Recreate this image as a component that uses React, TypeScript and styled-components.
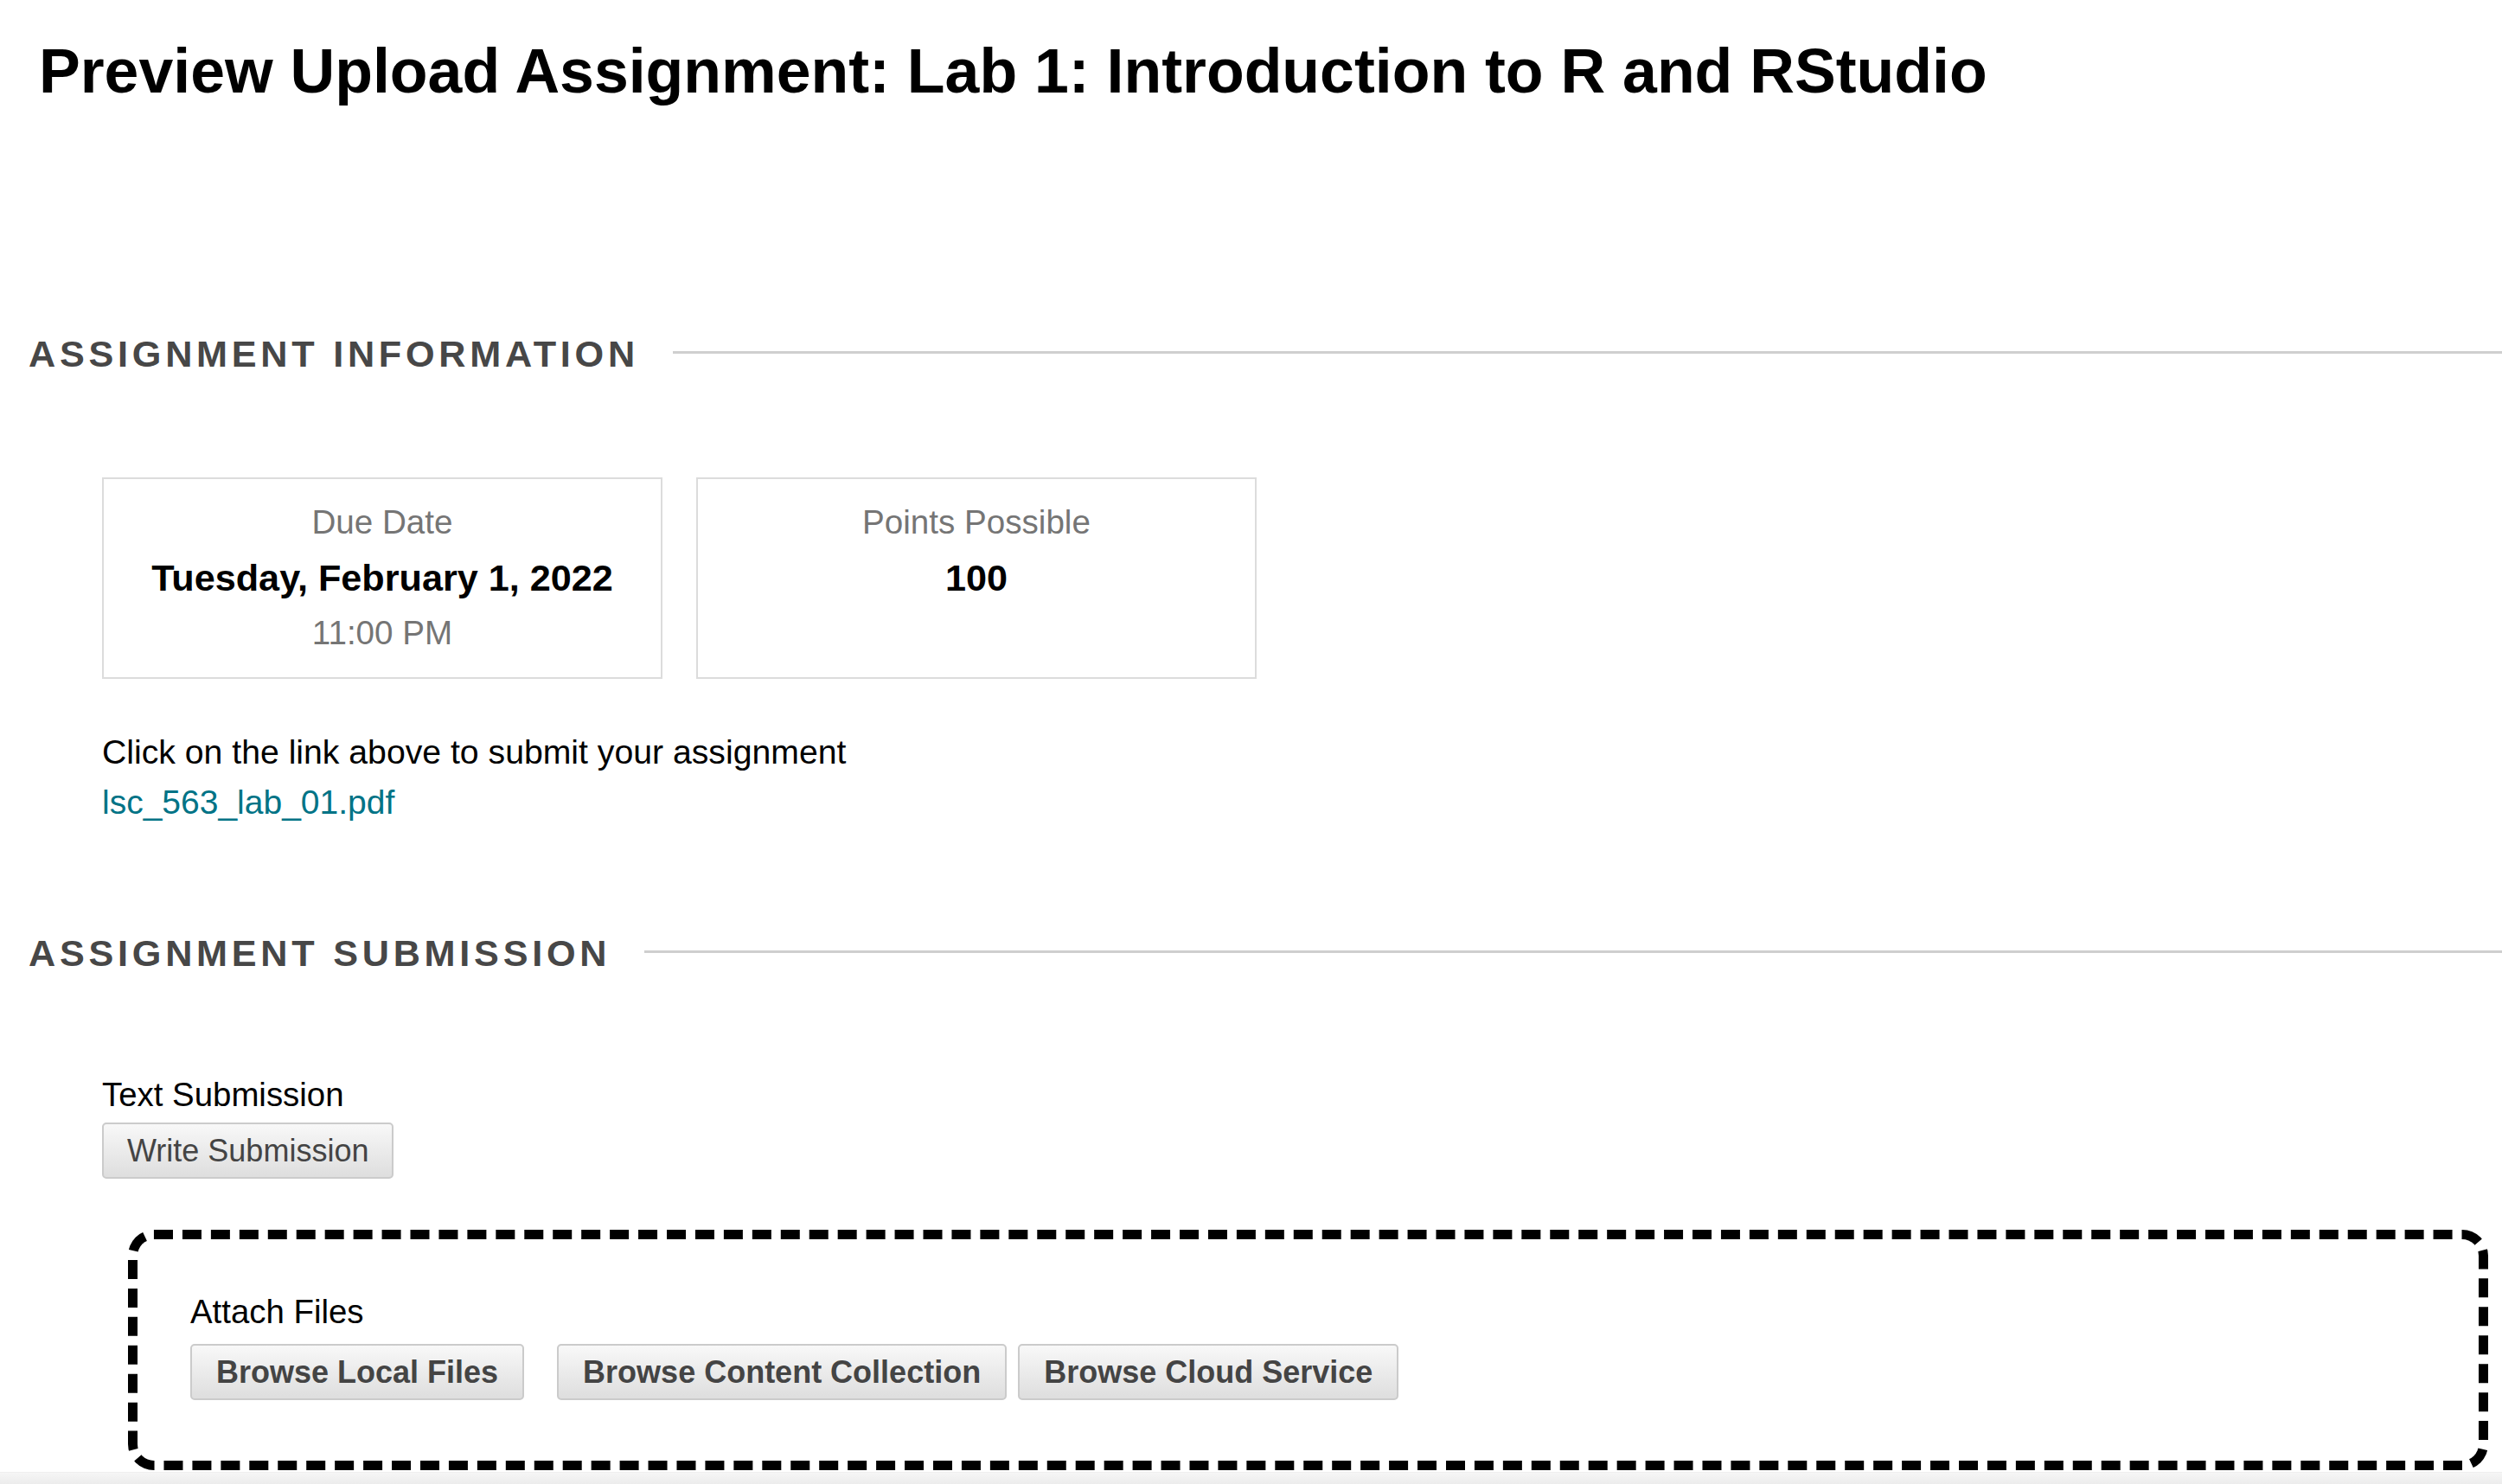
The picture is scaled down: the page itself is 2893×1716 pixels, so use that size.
import React from "react";
import styled, { createGlobalStyle } from "styled-components";

const GlobalStyle = createGlobalStyle`
  html, body {
    margin: 0;
    padding: 0;
    background: #ffffff;
    overflow: hidden;
  }
  body {
    font-family: "Liberation Sans", Arial, Helvetica, sans-serif;
    color: #000;
  }
  * { box-sizing: border-box; }
`;

const Page = styled.div`
  width: 100%;
  min-height: 1716px;
  position: relative;
`;

const Title = styled.h1`
  margin: 0;
  padding: 39px 0 0 45px;
  font-size: 71.6px;
  line-height: 86px;
  font-weight: 700;
  color: #000;
  white-space: nowrap;
`;

const SectionHeader = styled.div<{ $top: number }>`
  display: flex;
  align-items: center;
  margin-top: ${(p) => p.$top}px;
`;

const SectionTitle = styled.h2`
  margin: 0;
  padding-left: 33px;
  font-size: 43.2px;
  line-height: 52px;
  font-weight: 700;
  letter-spacing: 4.75px;
  color: #474747;
  text-transform: uppercase;
  white-space: nowrap;
`;

const Rule = styled.div`
  flex: 1;
  height: 3px;
  margin-left: 39px;
  margin-bottom: 4px;
  background: #cfcfcf;
`;

const SectionBody = styled.div`
  padding-left: 118px;
`;

const CardRow = styled.div`
  display: flex;
  gap: 39px;
  margin-top: 117px;
`;

const Card = styled.div`
  width: 648px;
  border: 2px solid #dcdcdc;
  padding: 21px 0 22px;
  text-align: center;
`;

const CardLabel = styled.div`
  font-size: 38.6px;
  line-height: 58px;
  color: #757575;
`;

const CardValue = styled.div`
  font-size: 43.2px;
  line-height: 70px;
  font-weight: 700;
  color: #000;
`;

const Instruction = styled.p`
  margin: 56px 0 0;
  font-size: 39.2px;
  line-height: 58px;
  color: #000;
`;

const FileLink = styled.a`
  display: block;
  font-size: 39px;
  line-height: 58px;
  color: #007386;
  text-decoration: none;
`;

const FieldLabel = styled.div<{ $top: number }>`
  margin-top: ${(p) => p.$top}px;
  font-size: 38.4px;
  line-height: 58px;
  color: #000;
`;

const Button = styled.button<{ $bold?: boolean; $gapAfter?: number }>`
  height: 65px;
  padding: 0 ${(p) => (p.$bold ? 28 : 27)}px;
  margin-right: ${(p) => p.$gapAfter ?? 0}px;
  border: 2px solid #cbcbcb;
  border-radius: 5px;
  background: linear-gradient(#f8f8f8, #dedede);
  font-family: "Liberation Sans", Arial, sans-serif;
  font-size: 36px;
  line-height: 61px;
  font-weight: ${(p) => (p.$bold ? 700 : 400)};
  color: #444;
  white-space: nowrap;
  cursor: pointer;
`;

const WriteRow = styled.div`
  display: flex;
  margin-top: 3px;
`;

const DropZone = styled.div`
  margin: 59px 16px 0 30px;
  border: 11px dashed #000;
  border-radius: 30px;
  padding: 55px 0 70px 61px;
`;

const ButtonRow = styled.div`
  display: flex;
  gap: 13px;
  margin-top: 8px;
`;

const FooterShade = styled.div`
  position: fixed;
  left: 0;
  right: 0;
  bottom: 0;
  height: 14px;
  background: linear-gradient(#f6f6f6, #ececec);
  border-top: 1px solid #efefef;
`;

export default function App() {
  return (
    <>
      <GlobalStyle />
      <Page>
        <Title>Preview Upload Assignment: Lab 1: Introduction to R and RStudio</Title>

        <SectionHeader $top={258}>
          <SectionTitle>Assignment Information</SectionTitle>
          <Rule />
        </SectionHeader>

        <SectionBody>
          <CardRow>
            <Card>
              <CardLabel>Due Date</CardLabel>
              <CardValue>Tuesday, February 1, 2022</CardValue>
              <CardLabel>11:00 PM</CardLabel>
            </Card>
            <Card>
              <CardLabel>Points Possible</CardLabel>
              <CardValue>100</CardValue>
            </Card>
          </CardRow>

          <Instruction>Click on the link above to submit your assignment</Instruction>
          <FileLink href="#">lsc_563_lab_01.pdf</FileLink>
        </SectionBody>

        <SectionHeader $top={119}>
          <SectionTitle>Assignment Submission</SectionTitle>
          <Rule />
        </SectionHeader>

        <SectionBody>
          <FieldLabel $top={109}>Text Submission</FieldLabel>
          <WriteRow>
            <Button>Write Submission</Button>
          </WriteRow>

          <DropZone>
            <FieldLabel $top={0}>Attach Files</FieldLabel>
            <ButtonRow>
              <Button $bold $gapAfter={25}>Browse Local Files</Button>
              <Button $bold>Browse Content Collection</Button>
              <Button $bold>Browse Cloud Service</Button>
            </ButtonRow>
          </DropZone>
        </SectionBody>

        <FooterShade />
      </Page>
    </>
  );
}
